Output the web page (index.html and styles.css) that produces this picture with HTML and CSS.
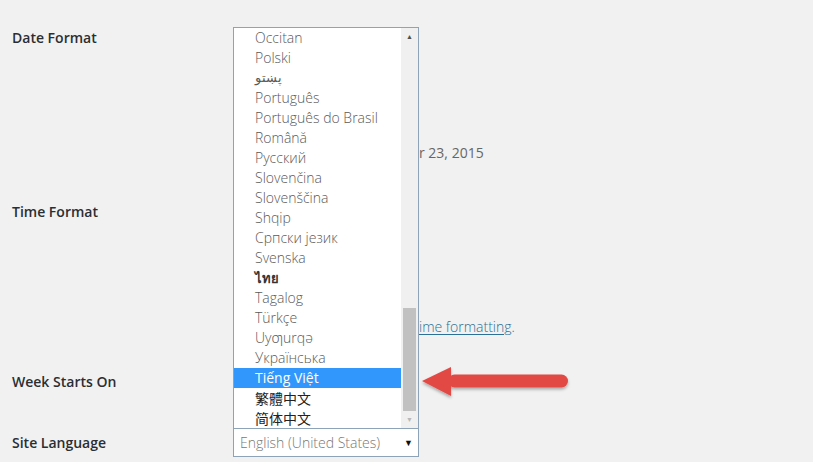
FILE: index.html
```html
<!DOCTYPE html>
<html>
<head>
<meta charset="utf-8">
<link rel="stylesheet" href="styles.css">
</head>
<body>
<div class="form">
  <div class="row row-date">
    <div class="label">Date Format</div>
    <div class="field"><span class="preview">r 23, 2015</span></div>
  </div>
  <div class="row row-time">
    <div class="label">Time Format</div>
    <div class="field"><span class="doc"><a href="#">ime formatting</a>.</span></div>
  </div>
  <div class="row row-week">
    <div class="label">Week Starts On</div>
    <div class="field"></div>
  </div>
  <div class="row row-lang">
    <div class="label">Site Language</div>
    <div class="field">
      <div class="select">
        <span class="select-text">English (United States)</span>
        <span class="select-arrow">▼</span>
      </div>
    </div>
  </div>
</div>

<div class="popup">
  <ul class="options">
    <li>Occitan</li>
    <li>Polski</li>
    <li class="rtl">پښتو</li>
    <li>Português</li>
    <li>Português do Brasil</li>
    <li>Română</li>
    <li>Русский</li>
    <li>Slovenčina</li>
    <li>Slovenščina</li>
    <li>Shqip</li>
    <li>Српски језик</li>
    <li>Svenska</li>
    <li class="thai">ไทย</li>
    <li>Tagalog</li>
    <li>Türkçe</li>
    <li>Uyƣurqə</li>
    <li>Українська</li>
    <li class="selected">Tiếng Việt</li>
    <li class="cjk">繁體中文</li>
    <li class="cjk">简体中文</li>
  </ul>
  <div class="scrollbar">
    <span class="sb-up">▲</span>
    <div class="sb-track"><div class="sb-thumb"></div></div>
    <span class="sb-down">▼</span>
  </div>
</div>

<svg class="arrow" width="160" height="40" viewBox="0 0 160 40">
  <defs>
    <filter id="sh" x="-10%" y="-30%" width="120%" height="170%">
      <feDropShadow dx="0" dy="2" stdDeviation="1.6" flood-color="#000" flood-opacity="0.3"/>
    </filter>
  </defs>
  <g filter="url(#sh)" fill="#e24a45">
    <polygon points="4,17 33,3 33,32"/>
    <rect x="30" y="10.5" width="120" height="13" rx="6.5"/>
  </g>
</svg>
</body>
</html>
```
FILE: styles.css
```css
html, body {
  margin: 0;
  padding: 0;
  background: #f1f1f1;
}
body {
  width: 813px;
  height: 462px;
  overflow: hidden;
  font-family: "Open Sans", "Noto Sans", sans-serif;
  font-size: 14px;
  color: #222;
  position: relative;
}
.form {
  padding-top: 28px;
}
.row {
  display: grid;
  grid-template-columns: 233px 1fr;
}
.label {
  padding-left: 12px;
  font-weight: 600;
  line-height: 20px;
  color: #2a2e33;
}
.field {
  line-height: 20px;
}
.row-date { height: 174px; }
.row-time { height: 170px; }
.row-week { height: 60px; }
.row-lang {
  align-items: center;
  margin-top: -4px;
}
.row-date .field,
.row-time .field {
  padding-top: 115px;
  padding-left: 186px;
}
.preview {
  color: #666;
}
.doc {
  color: #666;
  font-weight: 300;
}
.doc a {
  color: #2b7096;
  text-decoration: underline;
  text-underline-offset: 2px;
}
.select {
  width: 184px;
  height: 27px;
  border: 1px solid #8ea3b8;
  background: #fff;
  display: flex;
  align-items: center;
  justify-content: space-between;
  box-sizing: content-box;
}
.select-text {
  padding-left: 6px;
  font-weight: 300;
  color: #777;
}
.select-arrow {
  font-size: 9px;
  color: #111;
  padding-right: 5px;
}
.popup {
  position: absolute;
  left: 233px;
  top: 27px;
  width: 184px;
  height: 400px;
  border: 1px solid #8ea3b8;
  border-bottom: 0;
  background: #fff;
  display: flex;
}
.options {
  list-style: none;
  margin: 0;
  padding: 0;
  flex: 1;
}
.options li {
  height: 20px;
  line-height: 20px;
  padding-left: 21px;
  font-weight: 300;
  color: #5a5a5a;
  white-space: nowrap;
}
.options li.rtl {
  font-family: "DejaVu Sans", sans-serif;
  font-size: 13px;
}
.options li.thai {
  font-weight: 700;
  color: #333;
  font-size: 13px;
  font-family: "Noto Sans", "DejaVu Sans", sans-serif;
}
.options li.cjk {
  font-family: "Noto Sans CJK TC", "Noto Sans CJK SC", sans-serif;
  color: #222;
  font-weight: 400;
}
.options li.selected {
  background: #3297fd;
  color: #fff;
  font-weight: 400;
}
.scrollbar {
  width: 17px;
  background: #f0f0f0;
  display: flex;
  flex-direction: column;
  align-items: center;
}
.sb-up, .sb-down {
  font-size: 7px;
  height: 17px;
  line-height: 17px;
  color: #505050;
}
.sb-down {
  color: #b8b8b8;
}
.sb-track {
  flex: 1;
  width: 100%;
  position: relative;
}
.sb-thumb {
  position: absolute;
  left: 2px;
  right: 2px;
  top: 263px;
  bottom: 0;
  background: #c1c1c1;
}
.arrow {
  position: absolute;
  left: 418px;
  top: 364px;
}
```
